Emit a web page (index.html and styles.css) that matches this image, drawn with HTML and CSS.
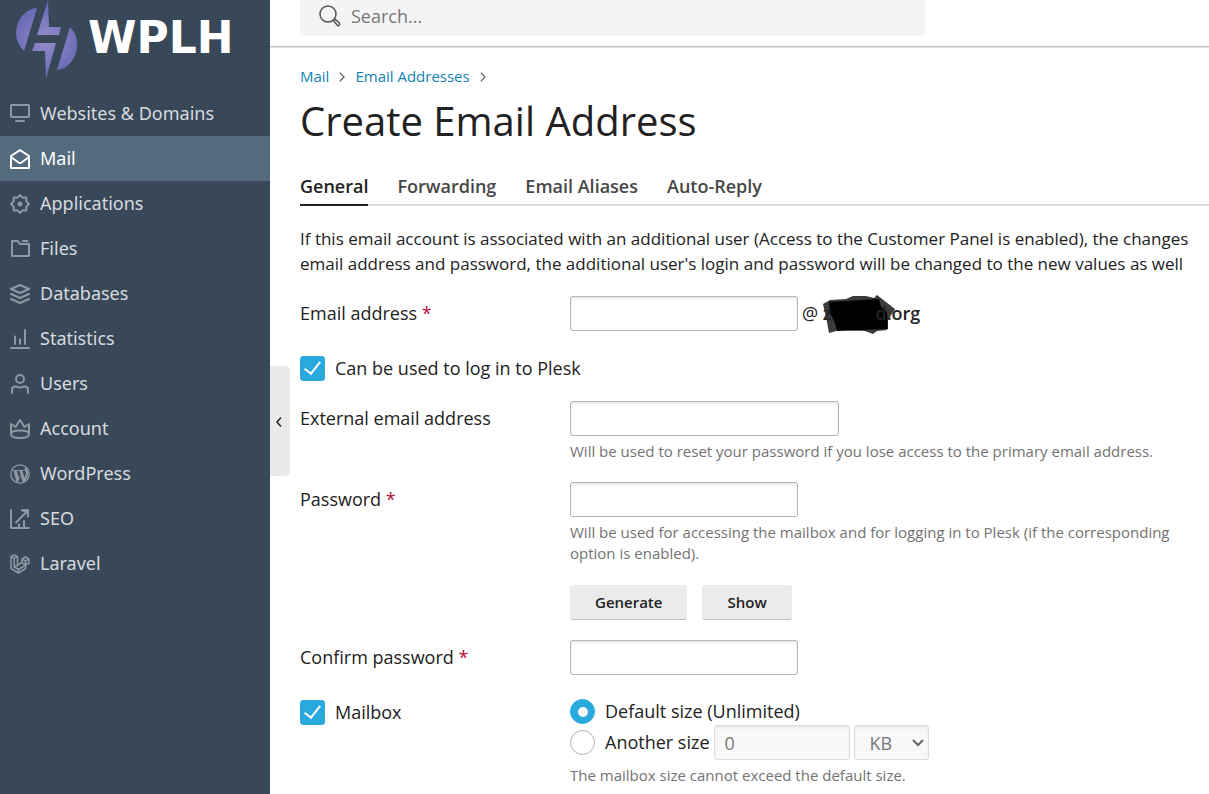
FILE: index.html
```html
<!DOCTYPE html>
<html lang="en">
<head>
<meta charset="utf-8">
<title>Create Email Address</title>
<link rel="stylesheet" href="styles.css">
</head>
<body>
<div class="app">
  <aside class="sidebar">
    <a class="logo" href="#">
      <svg class="logo-mark" width="64" height="80" viewBox="0 0 64 80" aria-hidden="true">
        <defs>
          <radialGradient id="violet" gradientUnits="userSpaceOnUse" cx="31" cy="40" r="34">
            <stop offset="0" stop-color="#9a8dcb"/>
            <stop offset="1" stop-color="#686bb5"/>
          </radialGradient>
        </defs>
        <g fill="url(#violet)">
          <path d="M21 8C9 9 0 20 0 33C0 40 3 46 8 51Z"/>
          <path d="M32 0L33 27H45L43 35H21Z"/>
          <path d="M19 43H40L30 79L29 51H16Z"/>
          <path d="M54 27C59 32 61 38 61 45C61 58 52 69 41 70Z"/>
        </g>
      </svg>
      <span class="logo-text">WPLH</span>
    </a>
    <nav class="menu">
      <a class="menu-item" href="#"><svg class="icon" viewBox="0 0 20 20"><rect x="1" y="1" width="18" height="12" rx=".7"/><path d="M6 17h8"/></svg>Websites &amp; Domains</a>
      <a class="menu-item active" href="#"><svg class="icon" viewBox="0 0 20 20"><path d="M1 7L10 1.2L19 7V19H1Z"/><path d="M1 8L8.5 13.5Q10 14.5 11.5 13.5L19 8"/></svg>Mail</a>
      <a class="menu-item" href="#"><svg class="icon" viewBox="0 0 20 20"><path d="M8 3.200L10 1L12 3.200L13.400 3.800L16.400 3.600L16.200 6.600L16.800 8L19 10L16.800 12L16.200 13.400L16.400 16.400L13.400 16.200L12 16.800L10 19L8 16.800L6.600 16.200L3.600 16.400L3.800 13.400L3.200 12L1 10L3.200 8L3.800 6.600L3.600 3.600L6.600 3.800Z"/><circle class="solid" cx="10" cy="10" r="2.500"/></svg>Applications</a>
      <a class="menu-item" href="#"><svg class="icon" viewBox="0 0 20 20"><path d="M2 2H7.500L10 5H19V17H2Z"/><path d="M12.500 2H17.500"/></svg>Files</a>
      <a class="menu-item" href="#"><svg class="icon" viewBox="0 0 20 20"><path d="M1 5L10 1L19 5L10 9Z"/><path d="M1 10L10 14L19 10M1 15L10 19L19 15"/></svg>Databases</a>
      <a class="menu-item" href="#"><svg class="icon" viewBox="0 0 20 20"><path d="M1 19H19M5 7.500V15M10 10.500V15M15 1V15"/></svg>Statistics</a>
      <a class="menu-item" href="#"><svg class="icon" viewBox="0 0 20 20"><circle cx="10" cy="5" r="4"/><path d="M2 19V16Q2 12.500 5.500 12.500Q7 12.500 8 13.100Q10 14 12 13.100Q13 12.500 14.500 12.500Q18 12.500 18 16V19"/></svg>Users</a>
      <a class="menu-item" href="#"><svg class="icon" viewBox="0 0 20 20"><path d="M1 15V5L5.500 8L10 1L14.500 8L19 5V15Q19 19 10 19T1 15Q1 11.500 10 11.500T19 15"/></svg>Account</a>
      <a class="menu-item" href="#"><svg class="icon" viewBox="0 0 20 20"><circle cx="10" cy="10" r="9.200" stroke-width="1.300"/><path class="solid" d="M2.600 6.100H8.100V6.800L6.800 7L9.300 14.200L10.600 10.200L9.500 7L8.300 6.800V6.100H13.700V6.800L12.300 7L14.700 14L15.900 10C16.400 8.200 14.400 6.900 14.400 5.200Q14.500 3.800 16 3.800Q19.500 8 17.600 12.300L15 18L12.900 18.500L10.500 11.800L8 18.700L6.500 18L3.500 7L2.200 6.800Z"/></svg>WordPress</a>
      <a class="menu-item" href="#"><svg class="icon" viewBox="0 0 20 20"><path d="M1 1V19H19M6 13.500L16.500 3M12 1.500H18V7.500M9 18V15.500M14 18V12"/><path class="solid" d="M11 0H19V8L16.500 5L14 3Z"/></svg>SEO</a>
      <a class="menu-item" href="#"><svg class="icon" viewBox="0 0 20 20"><path stroke-width="1.500" d="M1 2.500L4 .8L7.500 2.500V11L12 8.500V5L15.500 3L19 5V9L15.500 11V14.500L8.500 19L1 14.500ZM1 2.500L4.200 4.200L7.500 2.500M4.200 4.200V13L8.500 15.500L15.500 11L12 8.700M4.500 13L8 11M12 5L15.500 7L19 5M15.500 7V11M8.500 15.500V19"/></svg>Laravel</a>
    </nav>
    <button class="collapse" type="button" aria-label="Collapse sidebar"><svg width="8" height="12" viewBox="0 0 8 12"><path d="M6 1.500L2 6L6 10.500"/></svg></button>
  </aside>

  <div class="page">
    <header class="topbar">
      <div class="search">
        <svg class="search-icon" width="22" height="22" viewBox="0 0 22 22" aria-hidden="true"><circle cx="9" cy="9" r="8"/><path d="M14.500 15.500L16 14L20.500 18.300Q21 19.500 20 20.300Q19 21 18.300 20.300Z"/></svg>
        <input class="search-input" type="search" placeholder="Search..." aria-label="Search">
      </div>
    </header>
    <main class="content">
      <nav class="breadcrumbs" aria-label="Breadcrumb">
        <a href="#">Mail</a><svg class="crumb-arrow" viewBox="0 0 6 10"><path d="M.8 .6L5 5L.8 9.400"/></svg>
        <a href="#">Email Addresses</a><svg class="crumb-arrow" viewBox="0 0 6 10"><path d="M.8 .6L5 5L.8 9.400"/></svg>
      </nav>
      <h1 class="title">Create Email Address</h1>
      <nav class="tabs">
        <a class="tab current" href="#">General</a>
        <a class="tab" href="#">Forwarding</a>
        <a class="tab" href="#">Email Aliases</a>
        <a class="tab" href="#">Auto-Reply</a>
      </nav>
      <p class="intro">If this email account is associated with an additional user (Access to the Customer Panel is enabled), the changes<br>email address and password, the additional user's login and password will be changed to the new values as well</p>

      <form class="form">
        <div class="row">
          <label class="label" for="email">Email address <span class="required">*</span></label>
          <div class="field inline">
            <input class="text" id="email" type="text">
            <span class="domain">@ <b class="domain-name"><svg class="scribble" width="73" height="40" viewBox="0 0 73 40" aria-hidden="true"><path fill="#3c3c3c" d="M0 9L7 5L23 4L30 1H43L51 3L54 0L72 14L65 25L64 35L54 36L50 39L42 36L17 35L6 38L4 27Z"/><path fill="#000" d="M6 7L56 4L58 12L64 17L65 34L14 36L12 28L7 18Z"/></svg><span>z</span><span>d.org</span></b></span>
          </div>
        </div>
        <div class="row">
          <label class="check-label"><input class="check" type="checkbox" checked>Can be used to log in to Plesk</label>
        </div>
        <div class="row after-check">
          <label class="label" for="external">External email address</label>
          <div class="field">
            <input class="text wide" id="external" type="text">
            <p class="hint">Will be used to reset your password if you lose access to the primary email address.</p>
          </div>
        </div>
        <div class="row">
          <label class="label" for="password">Password <span class="required">*</span></label>
          <div class="field">
            <input class="text" id="password" type="password">
            <p class="hint">Will be used for accessing the mailbox and for logging in to Plesk (if the corresponding option is enabled).</p>
            <div class="buttons">
              <button class="button" type="button">Generate</button>
              <button class="button" type="button">Show</button>
            </div>
          </div>
        </div>
        <div class="row">
          <label class="label" for="confirm">Confirm password <span class="required">*</span></label>
          <div class="field"><input class="text" id="confirm" type="password"></div>
        </div>
        <div class="row">
          <label class="check-label label"><input class="check" type="checkbox" checked>Mailbox</label>
          <div class="field">
            <label class="radio-label first"><input class="radio" type="radio" name="size" checked>Default size (Unlimited)</label>
            <div class="inline">
              <label class="radio-label"><input class="radio" type="radio" name="size">Another size</label>
              <input class="text amount" type="text" value="0" aria-label="Size" disabled>
              <span class="select-wrap"><select class="unit" aria-label="Unit" disabled><option>KB</option></select><svg class="chevron" width="12" height="8" viewBox="0 0 12 8" aria-hidden="true"><path d="M1 1L6 6L11 1"/></svg></span>
            </div>
            <p class="hint">The mailbox size cannot exceed the default size.</p>
          </div>
        </div>
      </form>
    </main>
  </div>
</div>
</body>
</html>
```

FILE: styles.css
```css
* { box-sizing: border-box; }

body {
  margin: 0;
  overflow: hidden;
  background: #fff;
  color: #222;
  font: 18px/25px "Open Sans", "Noto Sans", sans-serif;
}

p, h1 { margin: 0; }
a { text-decoration: none; }
input, select, button { font: inherit; color: inherit; margin: 0; }

.app { display: flex; min-height: 100vh; }

/* Sidebar */
.sidebar {
  position: relative;
  flex: 0 0 270px;
  background: #394859;
}

.logo {
  display: flex;
  align-items: center;
  gap: 8px;
  height: 91px;
  padding: 0 0 11px 16px;
  color: #fff;
}

.logo-mark { flex: none; }

.logo-text {
  font: bold 44px/44px "DejaVu Sans", sans-serif;
  padding-bottom: 4px;
}

.menu-item {
  display: flex;
  align-items: center;
  gap: 10px;
  height: 45px;
  padding-left: 10px;
  color: #d7dade;
  font-family: "Noto Sans", "Open Sans", sans-serif;
}

.menu-item.active { background: #546a7d; color: #fff; }

.icon {
  width: 20px;
  height: 20px;
  overflow: visible;
  fill: none;
  stroke: #8e97a2;
  stroke-width: 2;
  stroke-linecap: round;
  stroke-linejoin: round;
}

.icon .solid { fill: #8e97a2; stroke: none; }
.active .icon { stroke: #fff; }

.collapse {
  position: absolute;
  top: 366px;
  left: 100%;
  width: 20px;
  height: 110px;
  padding: 0 2px 0 0;
  border: 0;
  border-radius: 0 5px 5px 0;
  background: #e9e9e9;
}

.collapse svg { fill: none; stroke: #222; stroke-width: 1.5; }

/* Header */
.page { flex: 1; min-width: 0; }

.topbar {
  padding: 0 30px 10px;
  border-bottom: 1px solid #bfbfbf;
  box-shadow: 0 1px 1px #e4e4e4;
}

.search {
  display: flex;
  align-items: center;
  gap: 10px;
  max-width: 625px;
  height: 36px;
  padding: 0 19px 4px;
  border-radius: 0 0 4px 4px;
  background: #f4f4f4;
}

.search-icon { fill: none; stroke: #555; stroke-width: 1.5; }

.search-input {
  flex: 1;
  padding: 0;
  border: 0;
  outline: 0;
  background: none;
}

.search-input::placeholder { color: #777; }

/* Page head */
.content { padding: 17px 0 0 30px; }

.breadcrumbs { display: flex; align-items: center; font-size: 15px; }
.breadcrumbs a { color: #1283b0; }

.crumb-arrow {
  width: 6px;
  height: 10px;
  margin: 0 10px;
  fill: none;
  stroke: #666;
  stroke-width: 1.3;
}

.title {
  margin-top: 7px;
  font-size: 40px;
  font-weight: 400;
  line-height: 50px;
}

.tabs {
  display: flex;
  gap: 29px;
  margin-top: 28px;
  border-bottom: 2px solid #dcdcdc;
}

.tab {
  margin-bottom: -2px;
  padding-bottom: 5px;
  border-bottom: 2px solid transparent;
  color: #474747;
  font-weight: 600;
}

.tab.current { border-color: #222; color: #222; }

.intro { margin-top: 20px; font-size: 17px; white-space: nowrap; }

/* Form */
.form { margin-top: 20px; }

.row { display: flex; margin-bottom: 20px; }
.row.after-check { margin-top: -5px; }

.label { flex: 0 0 270px; padding-top: 5px; }
.required { color: #b8103b; }

.field { flex: 1; max-width: 625px; }
.inline { display: flex; align-items: center; gap: 4px; }

.text {
  display: block;
  width: 228px;
  height: 35px;
  padding: 0 10px;
  border: 1px solid #b3b3b3;
  border-radius: 3px;
  background: #fff;
  box-shadow: inset 0 2px 3px #ebebeb;
}

.text.wide { width: 269px; }
.text.amount { width: 136px; }

.text:disabled, .unit {
  border-color: #dcdcdc;
  background: #f8f8f8;
  color: #777;
}

.hint {
  margin-top: 5px;
  color: #737373;
  font-size: 15px;
  line-height: 21px;
}

.domain-name {
  position: relative;
  display: inline-flex;
  gap: 44px;
  isolation: isolate;
  font-weight: 600;
}

/* Blot over the hidden part of the domain */
.scribble { position: absolute; left: 0; top: -6px; z-index: -1; }

.check-label, .radio-label {
  display: flex;
  align-items: center;
  gap: 10px;
}

.check-label { height: 35px; padding: 0; }
.radio-label { height: 30px; }
.radio-label.first { padding-top: 3px; }

.check, .radio {
  flex: none;
  display: grid;
  place-items: center;
  width: 25px;
  height: 25px;
  appearance: none;
  border: 1px solid #b3b3b3;
  background: #fff;
}

.check { border-radius: 3px; }
.radio { border-radius: 50%; }
.check:checked, .radio:checked { border-color: #28aade; background: #28aade; }

.check:checked::before {
  content: "";
  width: 7px;
  height: 14px;
  margin-bottom: 6px;
  border: solid #fff;
  border-width: 0 2px 2px 0;
  transform: rotate(38deg);
}

.radio:checked::before {
  content: "";
  width: 10px;
  height: 10px;
  border-radius: 50%;
  background: #fff;
}

.buttons { display: flex; gap: 15px; margin-top: 21px; }

.button {
  height: 35px;
  padding: 0 25px;
  border: 0;
  border-bottom: 1px solid #bdbdbd;
  border-radius: 3px;
  background: #ebebeb;
  font-size: 15px;
  font-weight: 600;
}

.select-wrap { position: relative; }

.unit {
  display: block;
  width: 75px;
  height: 35px;
  padding: 2px 15px 0;
  border: 1px solid #dcdcdc;
  border-radius: 3px;
  box-shadow: inset 0 2px 3px #ebebeb;
  appearance: none;
  opacity: 1;
}

.chevron {
  position: absolute;
  right: 5px;
  top: 14px;
  fill: none;
  stroke: #666;
  stroke-width: 2;
  pointer-events: none;
}
```
